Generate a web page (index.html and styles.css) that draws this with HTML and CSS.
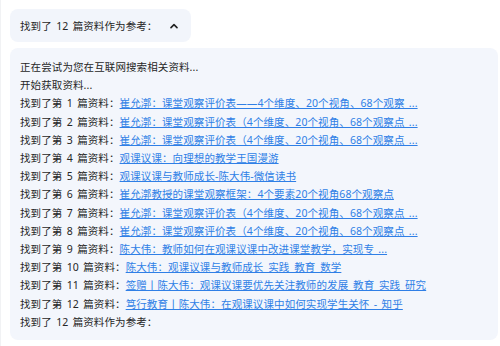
FILE: index.html
```html
<!DOCTYPE html>
<html lang="zh-CN">
<head>
  <meta charset="UTF-8" />
  <title>参考资料</title>
  <link rel="stylesheet" href="styles.css">
</head>
<body>

  <div class="page">
    <div class="toggle">
      <span>找到了 12 篇资料作为参考：</span>
      <svg class="chevron" width="8" height="6" viewBox="0 0 8 6">
        <path d="M1 4.6 L4 1.6 L7 4.6" fill="none" stroke="#222" stroke-width="1.6" stroke-linecap="round" stroke-linejoin="round"/>
      </svg>
    </div>

    <div class="panel">
      <p>正在尝试为您在互联网搜索相关资料...</p>
      <p>开始获取资料...</p>
      <p>找到了第 1 篇资料：<a href="#">崔允漷：课堂观察评价表——4个维度、20个视角、68个观察 ...</a></p>
      <p>找到了第 2 篇资料：<a href="#">崔允漷：课堂观察评价表（4个维度、20个视角、68个观察点 ...</a></p>
      <p>找到了第 3 篇资料：<a href="#">崔允漷：课堂观察评价表（4个维度、20个视角、68个观察点 ...</a></p>
      <p>找到了第 4 篇资料：<a href="#">观课议课：向理想的教学王国漫游</a></p>
      <p>找到了第 5 篇资料：<a href="#">观课议课与教师成长-陈大伟-微信读书</a></p>
      <p>找到了第 6 篇资料：<a href="#">崔允漷教授的课堂观察框架：4个要素20个视角68个观察点</a></p>
      <p>找到了第 7 篇资料：<a href="#">崔允漷：课堂观察评价表（4个维度、20个视角、68个观察点 ...</a></p>
      <p>找到了第 8 篇资料：<a href="#">崔允漷：课堂观察评价表（4个维度、20个视角、68个观察点 ...</a></p>
      <p>找到了第 9 篇资料：<a href="#">陈大伟：教师如何在观课议课中改进课堂教学，实现专 ...</a></p>
      <p>找到了第 10 篇资料：<a href="#">陈大伟：观课议课与教师成长_实践_教育_数学</a></p>
      <p>找到了第 11 篇资料：<a href="#">签赠丨陈大伟：观课议课要优先关注教师的发展_教育_实践_研究</a></p>
      <p>找到了第 12 篇资料：<a href="#">笃行教育丨陈大伟：在观课议课中如何实现学生关怀 - 知乎</a></p>
      <p>找到了 12 篇资料作为参考：</p>
    </div>
  </div>

</body>
</html>
```

FILE: styles.css
```css
/* Fondo */
body {
  margin: 0;
  background-color: #ffffff;
  font-family: "Noto Sans", "Noto Sans CJK SC", sans-serif;
  font-size: 10.5px;
  letter-spacing: 0.1px;
  word-spacing: 1.5px;
  color: #262626;
}

.page {
  border-left: 1px solid #f1f2f4;
  padding: 9px 2px 0 9px;
  min-height: 337px;
}

/* Cabecera plegable */
.toggle {
  display: flex;
  align-items: center;
  justify-content: space-between;
  width: 181px;
  height: 33px;
  padding: 0 10px 0 10px;
  background-color: #f2f5fb;
  border-radius: 8px;
  box-sizing: border-box;
  white-space: nowrap;
}

.chevron {
  display: block;
  margin-right: 3px;
}

/* Lista de resultados */
.panel {
  margin-top: 6px;
  background-color: #f3f6fc;
  border-radius: 8px;
  padding: 10px 10px 9px;
}

.panel p {
  margin: 0;
  line-height: 18.2px;
  white-space: nowrap;
}

.panel a {
  color: #2f7fe6;
  text-decoration: underline;
}
```
